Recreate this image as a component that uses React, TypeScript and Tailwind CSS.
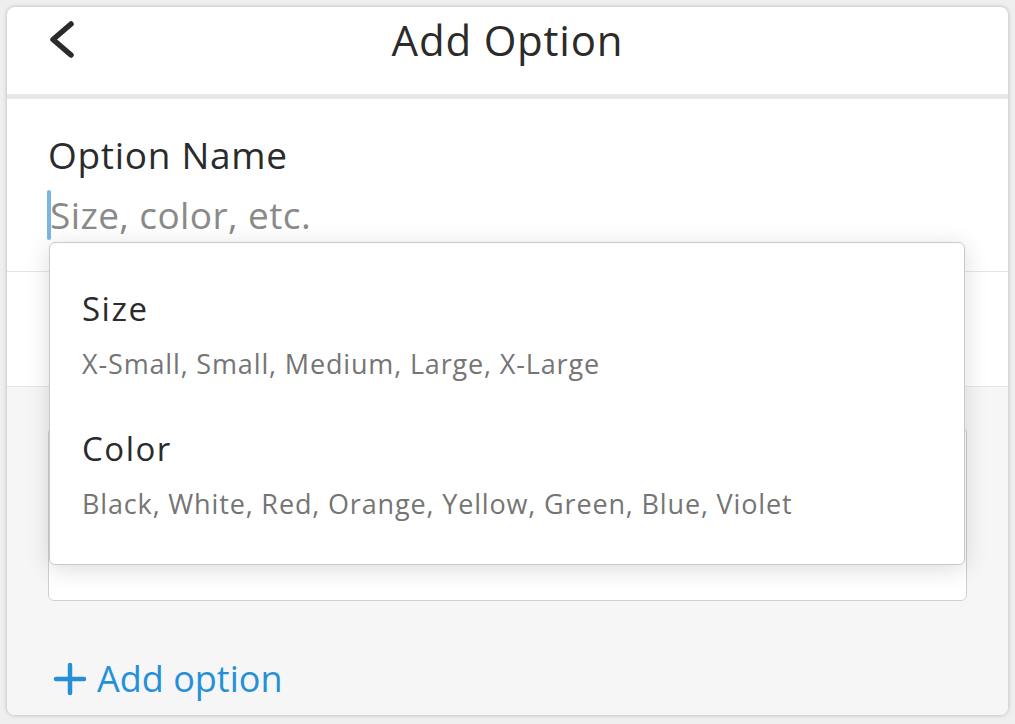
import React from 'react';

const font = { fontFamily: '"Open Sans", "Noto Sans", sans-serif' };

const suggestions = [
  { name: 'Size', values: 'X-Small, Small, Medium, Large, X-Large' },
  { name: 'Color', values: 'Black, White, Red, Orange, Yellow, Green, Blue, Violet' },
];

const App = () => {
  return (
    <div className="h-[724px] w-full bg-[#efefef] px-[7px] pt-[7px] pb-[9px]" style={font}>
      <div className="relative flex h-full flex-col overflow-hidden rounded-[8px] bg-white shadow-[0_0_4px_rgba(0,0,0,0.25)]">
        {/* Header */}
        <div className="grid h-[87px] grid-cols-[1fr_auto_1fr] items-start px-[41px] pt-[9px]">
          <button className="flex h-[48px] items-center">
            <svg width="30" height="40" viewBox="0 0 30 40">
              <polyline points="23,4 5,19.5 23,35" fill="none" stroke="#2b2b2b" strokeWidth="5.5" strokeLinecap="round" strokeLinejoin="round" />
            </svg>
          </button>
          <h1 className="text-[42px] leading-[48px] tracking-[0.8px] text-[#2b2b2b]">Add Option</h1>
          <div />
        </div>
        <div className="h-[5px] bg-[#e8e8e8]" />

        {/* Option name */}
        <div className="border-b border-[#e6e6e6] px-[41px] pt-[34px] pb-[34px]">
          <div className="text-[37px] leading-[44px] tracking-[0.7px] text-[#2b2b2b]">Option Name</div>
          <div className="relative mt-[16px] flex items-center">
            <span className="absolute -left-[1px] top-[-3px] h-[50px] w-[4px] rounded-[2px] bg-[#7ab6e4]" />
            <span className="pl-[2px] text-[37px] leading-[44px] tracking-[0.4px] text-[#8a8a8a]">Size, color, etc.</span>
          </div>
        </div>

        {/* Option values row */}
        <div className="h-[115px] border-b border-[#e6e6e6] bg-white" />

        {/* Gray section */}
        <div className="flex flex-1 flex-col bg-[#f6f6f6] px-[41px]">
          <div className="mt-[40px] h-[174px] rounded-[6px] border border-[#cfcfcf] bg-white" />
          <button className="mt-[56px] flex items-center gap-[10px] text-[#2590d8]">
            <svg width="34" height="34" viewBox="0 0 34 34" className="ml-[5px]">
              <path d="M17 3 V31 M3 17 H31" stroke="#2590d8" strokeWidth="4.5" strokeLinecap="round" />
            </svg>
            <span className="text-[36px] leading-[44px]">Add option</span>
          </button>
        </div>

        {/* Suggestion dropdown */}
        <div className="absolute left-[42px] top-[235px] h-[323px] w-[916px] rounded-[6px] border border-[#c9c9c9] bg-white px-[32px] pt-[46px] shadow-[0_4px_24px_rgba(0,0,0,0.14)]">
          {suggestions.map((s, i) => (
            <div key={s.name} className={i > 0 ? 'mt-[49px]' : ''}>
              <div className="text-[33px] leading-[40px] tracking-[1.5px] text-[#2b2b2b]">{s.name}</div>
              <div className="mt-[19px] text-[27px] leading-[32px] tracking-[0.85px] text-[#757575]">{s.values}</div>
            </div>
          ))}
        </div>
      </div>
    </div>
  );
};

export default App;
